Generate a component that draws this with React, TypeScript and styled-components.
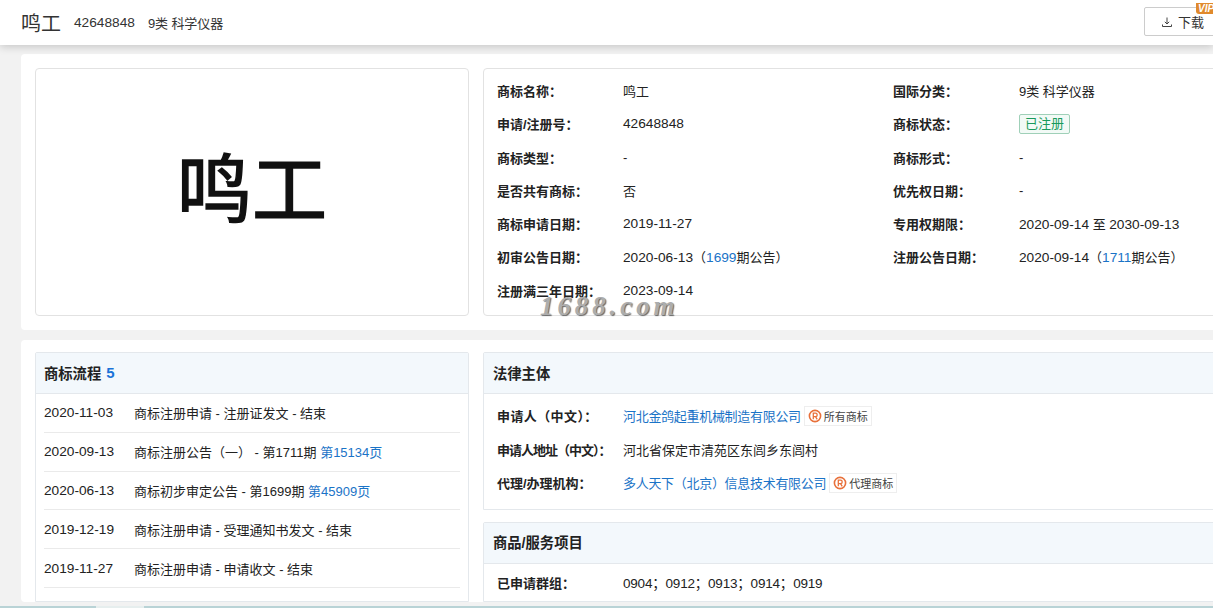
import React from 'react';
import styled, { createGlobalStyle } from 'styled-components';

const Global = createGlobalStyle`
  html, body { margin: 0; padding: 0; width: 1213px; height: 608px; overflow: hidden; background: #f2f2f2; }
  body { font-family: "Liberation Sans", "Noto Sans CJK SC", sans-serif; color: #222; font-size: 13px; }
`;

const Page = styled.div`
  position: relative;
  width: 1213px;
  height: 608px;
  overflow: hidden;
  display: flex;
  flex-direction: column;
  background: #f2f2f2;
`;
const Header = styled.header`
  height: 45px;
  flex: none;
  box-sizing: border-box;
  padding-left: 21px;
  display: flex;
  align-items: center;
  background: #fff;
  box-shadow: 0 2px 8px rgba(0,0,0,.18);
  position: relative;
  z-index: 1;
`;
const Title = styled.span`
  font-size: 20px;
  color: #333;
  margin-right: 13px;
`;
const HeadText = styled.span`
  font-size: 13px;
  color: #333;
  margin-right: 13px;
  letter-spacing: -0.1px;
`;
const Num = styled.span`
  font-size: 13.7px;
  letter-spacing: 0;
`;
const Groups = styled.span`
  font-size: 13.5px;
  letter-spacing: -0.2px;
`;
const Download = styled.button`
  position: absolute;
  left: 1144px;
  top: 7px;
  width: 90px;
  height: 29px;
  box-sizing: border-box;
  padding: 0 0 0 16px;
  display: flex;
  align-items: center;
  gap: 5px;
  background: #fff;
  border: 1px solid #ccc;
  border-radius: 2px;
  font: inherit;
  color: #333;
`;
const Vip = styled.span`
  position: absolute;
  left: 1196px;
  top: 3px;
  width: 24px;
  height: 11px;
  background: #e08a2c;
  color: #fff;
  font: italic bold 10px/11px "Liberation Sans", sans-serif;
  padding-left: 2px;
  border-bottom-left-radius: 3px;
`;
const Body = styled.main`
  flex: none;
  width: 1300px;
  margin: 9px 0 0 21px;
  display: flex;
  flex-direction: column;
  gap: 10px;
`;
const Section = styled.section`
  background: #fff;
  border-radius: 4px;
  padding: 14px;
  display: grid;
  grid-template-columns: 434px 1fr;
  column-gap: 14px;
`;
const LowerSection = styled(Section)`
  height: 262px;
  box-sizing: border-box;
  padding: 12px 14px 0;
`;
const LogoBox = styled.div`
  height: 248px;
  box-sizing: border-box;
  border: 1px solid #e2e2e2;
  border-radius: 4px;
  display: flex;
  align-items: center;
  justify-content: center;
  font-size: 75px;
  color: #111;
  -webkit-text-stroke: 1.5px #111;
  padding-bottom: 15px;
`;
const InfoBox = styled.div`
  height: 248px;
  box-sizing: border-box;
  border: 1px solid #e2e2e2;
  border-radius: 4px;
  padding: 5px 13px;
  display: grid;
  grid-template-columns: 396px 1fr;
  grid-auto-rows: 33.25px;
  align-items: center;
`;
const Field = styled.div`
  display: grid;
  grid-template-columns: 126px 1fr;
  align-items: center;
`;
const Label = styled.span`
  font-weight: 700;
  color: #222;
`;
const Val = styled.span`
  color: #222;
`;
const A = styled.a`
  color: #1a73c7;
`;
const CompanyLink = styled(A)`
  letter-spacing: -0.3px;
`;
const Status = styled.span`
  display: inline-block;
  box-sizing: border-box;
  height: 20px;
  width: 51px;
  text-align: center;
  line-height: 18px;
  border: 1px solid #9fd0b8;
  background: #f2faf6;
  color: #1a9a5c;
  border-radius: 2px;
`;
const Panel = styled.div`
  border: 1px solid #e4e8ec;
  border-radius: 2px 2px 0 0;
  overflow: hidden;
  background: #fff;
`;
const PanelHead = styled.div<{ $inset?: number }>`
  height: 41px;
  box-sizing: border-box;
  padding: 0 0 2px ${(p) => p.$inset ?? 9}px;
  display: flex;
  align-items: center;
  gap: 5px;
  background: #f3f8fc;
  border-bottom: 1px solid #e4e8ec;
  font-weight: 700;
  font-size: 14.3px;
  color: #222;
`;
const Count = styled.span`
  color: #1a73d8;
  font-size: 15px;
`;
const Column = styled.div`
  display: flex;
  flex-direction: column;
  gap: 12px;
`;
const GrowPanel = styled(Panel)`
  flex: 1;
`;
const Step = styled.div`
  margin: 0 8px;
  height: 38.8px;
  box-sizing: border-box;
  border-bottom: 1px solid #eaeaea;
  display: grid;
  grid-template-columns: 90px 1fr;
  align-items: center;
  color: #222;
`;
const SubjectList = styled.div`
  padding: 5px 13px 9px;
`;
const SubjectRow = styled.div`
  height: 33.5px;
  display: flex;
  align-items: center;
`;
const SubjectLabel = styled.span<{ $spacing?: number }>`
  font-weight: 700;
  color: #222;
  flex: none;
  width: 126px;
  white-space: nowrap;
  letter-spacing: ${(p) => p.$spacing ?? 0}px;
`;
const Tag = styled.span`
  margin-left: 3px;
  height: 20px;
  box-sizing: border-box;
  padding: 0 3px;
  display: inline-flex;
  align-items: center;
  gap: 2px;
  border: 1px solid #eee;
  font-size: 11px;
  color: #444;
`;
const GroupRow = styled.div`
  padding: 0 13px;
  height: 37px;
  display: grid;
  grid-template-columns: 126px 1fr;
  align-items: center;
`;
const Strip = styled.div`
  position: absolute;
  left: 0;
  right: 0;
  bottom: 0;
  height: 2px;
  background: linear-gradient(90deg, #b9d3d6 0 96px, #e6eeee 96px 144px, #b9d3d6 144px);
`;
const Stamp = styled.div`
  position: absolute;
  left: 540px;
  top: 293px;
  font: italic bold 27px/26px "Liberation Serif", serif;
  letter-spacing: 3.9px;
  color: #adadad;
  text-shadow: 1px 1px 1px #666;
  z-index: 2;
`;

const DownIcon = () => (
  <svg width="12" height="12" viewBox="0 0 12 12" fill="none" stroke="#444" strokeWidth="1">
    <path d="M6 1.5v6.5M3.8 5.8 6 8l2.2-2.2M1.5 8.5v2h9v-2" />
  </svg>
);
const RegIcon = () => (
  <svg width="14" height="14" viewBox="0 0 14 14" fill="none" stroke="#e8703a" strokeWidth="1.6">
    <circle cx="7" cy="7" r="5.6" />
    <path d="M5.3 10.3V4.2h2.2a1.6 1.6 0 0 1 0 3.4H5.3M7.5 7.6 9.2 10.3" strokeWidth="1.3" />
  </svg>
);

const left1: [string, React.ReactNode][] = [
  ['商标名称：', '鸣工'],
  ['申请/注册号：', <Num>42648848</Num>],
  ['商标类型：', '-'],
  ['是否共有商标：', '否'],
  ['商标申请日期：', <Num>2019-11-27</Num>],
  ['初审公告日期：', <><Num>2020-06-13</Num>（<A><Num>1699</Num></A>期公告）</>],
  ['注册满三年日期：', <Num>2023-09-14</Num>],
];
const right1: [string, React.ReactNode][] = [
  ['国际分类：', '9类 科学仪器'],
  ['商标状态：', <Status>已注册</Status>],
  ['商标形式：', '-'],
  ['优先权日期：', '-'],
  ['专用权期限：', <><Num>2020-09-14</Num> 至 <Num>2030-09-13</Num></>],
  ['注册公告日期：', <><Num>2020-09-14</Num>（<A><Num>1711</Num></A>期公告）</>],
];
const steps: [string, React.ReactNode][] = [
  ['2020-11-03', '商标注册申请 - 注册证发文 - 结束'],
  ['2020-09-13', <>商标注册公告（一） - 第1711期 <A>第15134页</A></>],
  ['2020-06-13', <>商标初步审定公告 - 第1699期 <A>第45909页</A></>],
  ['2019-12-19', '商标注册申请 - 受理通知书发文 - 结束'],
  ['2019-11-27', '商标注册申请 - 申请收文 - 结束'],
];

export default function App() {
  const cells: React.ReactNode[] = [];
  left1.forEach((l, i) => {
    cells.push(<Field key={'l' + i}><Label>{l[0]}</Label><Val>{l[1]}</Val></Field>);
    if (right1[i]) cells.push(<Field key={'r' + i}><Label>{right1[i][0]}</Label><Val>{right1[i][1]}</Val></Field>);
  });
  return (
    <Page>
      <Global />
      <Header>
        <Title>鸣工</Title>
        <HeadText><Num>42648848</Num></HeadText>
        <HeadText>9类 科学仪器</HeadText>
        <Download><DownIcon />下载</Download>
        <Vip>VIP</Vip>
      </Header>
      <Body>
        <Section>
          <LogoBox>鸣工</LogoBox>
          <InfoBox>{cells}</InfoBox>
        </Section>
        <LowerSection>
          <Panel>
            <PanelHead $inset={8}>商标流程 <Count>5</Count></PanelHead>
            {steps.map((s) => (
              <Step key={s[0]}><Num>{s[0]}</Num><span>{s[1]}</span></Step>
            ))}
          </Panel>
          <Column>
            <Panel>
              <PanelHead>法律主体</PanelHead>
              <SubjectList>
                <SubjectRow><SubjectLabel $spacing={0.4}>申请人（中文）：</SubjectLabel><CompanyLink>河北金鸽起重机械制造有限公司</CompanyLink><Tag><RegIcon />所有商标</Tag></SubjectRow>
                <SubjectRow><SubjectLabel $spacing={-1}>申请人地址（中文）：</SubjectLabel><Val>河北省保定市清苑区东闾乡东闾村</Val></SubjectRow>
                <SubjectRow><SubjectLabel>代理/办理机构：</SubjectLabel><CompanyLink>多人天下（北京）信息技术有限公司</CompanyLink><Tag><RegIcon />代理商标</Tag></SubjectRow>
              </SubjectList>
            </Panel>
            <GrowPanel>
              <PanelHead>商品/服务项目</PanelHead>
              <GroupRow><Label>已申请群组：</Label><Val><Groups>0904；0912；0913；0914；0919</Groups></Val></GroupRow>
            </GrowPanel>
          </Column>
        </LowerSection>
      </Body>
      <Stamp>1688.com</Stamp>
      <Strip />
    </Page>
  );
}
